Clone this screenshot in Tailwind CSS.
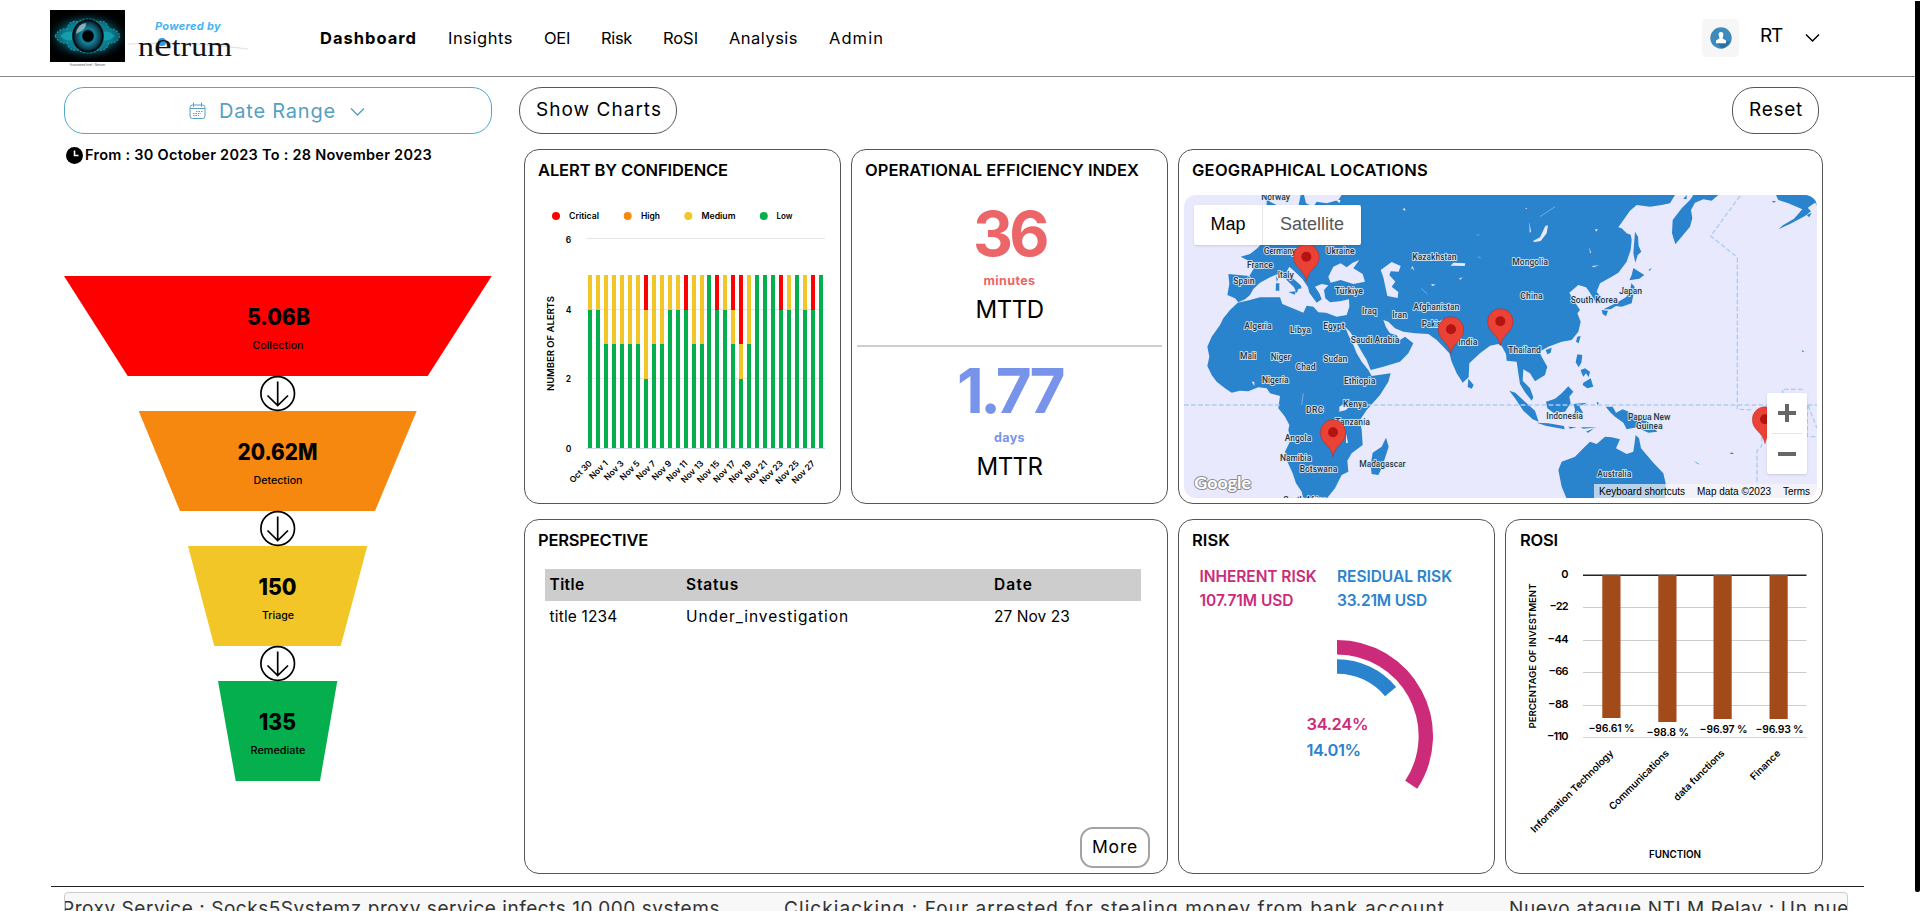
<!DOCTYPE html>
<html lang="en">
<head>
<meta charset="utf-8">
<title>Dashboard</title>
<script src="https://cdn.jsdelivr.net/npm/@tailwindcss/browser@4"></script>
</head>
<body class="relative h-[911px] w-[1920px] overflow-hidden whitespace-nowrap bg-white font-['Inter','Noto_Sans',sans-serif] text-black">
<header class="flex h-[77px] w-[1915px] items-start border-b border-[#8a8a8a]">
  <div class="ml-[50px] mt-[10px] flex w-[188px]">
    <div class="w-[75px]">
      <svg class="block" width="75" height="52" viewBox="0 0 75 52">
        <defs>
          <radialGradient id="glow"><stop offset="0" stop-color="#12b6cf"/><stop offset=".55" stop-color="#0a6f84"/><stop offset="1" stop-color="#000" stop-opacity="0"/></radialGradient>
          <radialGradient id="iris"><stop offset=".3" stop-color="#031018"/><stop offset=".45" stop-color="#15829b"/><stop offset=".8" stop-color="#0b4454"/><stop offset="1" stop-color="#01080c"/></radialGradient>
        </defs>
        <rect width="75" height="52" fill="#000"/>
        <ellipse cx="37.500" cy="26" rx="44" ry="26" fill="url(#glow)" opacity=".75"/>
        <path d="M5 26Q9 18 17 19Q20 9 28 12Q38 6 48 12Q56 9 59 19Q67 18 70 26Q67 34 59 33Q56 42 48 40Q38 46 28 40Q20 42 17 33Q9 34 5 26Z" fill="#0fa0b4" fill-opacity=".5" stroke="#1cb9c8" stroke-opacity=".7" stroke-width="1.200" stroke-dasharray="2 1.500"/>
        <path d="M10 26Q16 20 22 22V30Q16 32 10 26ZM65 26Q59 20 53 22V30Q59 32 65 26Z" fill="#1fc3d2" fill-opacity=".45"/>
        <ellipse cx="38" cy="26" rx="15" ry="16" fill="url(#iris)" stroke="#00090d" stroke-width="1.500"/>
        <circle cx="38" cy="26" r="5.500" fill="#000"/>
        <path d="M26 24Q27 14 36 13Q37 19 26 24Z" fill="#b9d5dc" opacity=".7"/>
      </svg>
      <div class="mt-px text-center text-[3px] leading-[4px] text-gray-600">Automated Intel : Netrum</div>
    </div>
    <div class="ml-[13px] w-[100px]">
      <div class="pl-[17px] pt-[7px] text-[11px] font-bold italic leading-[18px] text-[#45b4f5]"><span data-w="66">Powered by</span></div>
      <svg class="-ml-[10px] block overflow-visible" width="122" height="26" viewBox="128 35 122 26">
        <path d="M128 44Q190 40 248 49Q190 42 128 44Z" fill="#ccc" stroke="#ddd" stroke-width=".5"/>
        <circle cx="162" cy="42" r="4" fill="#2b9be6"/>
        <text x="138" y="55.500" font-family="Liberation Serif" font-size="27" fill="#111" textLength="94" lengthAdjust="spacingAndGlyphs">n<tspan font-size="34">e</tspan>trum</text>
      </svg>
    </div>
  </div>
  <nav class="ml-[82px] mt-[22px] flex gap-[31px] text-[16.500px] leading-[32px]">
    <b class="font-bold"><span data-w="97">Dashboard</span></b><span data-w="65">Insights</span><span data-w="26">OEI</span><span data-w="31">Risk</span><span data-w="35">RoSI</span><span data-w="69">Analysis</span><span data-w="55">Admin</span>
  </nav>
  <div class="ml-auto mr-[95px] mt-[19px] flex">
    <div class="flex h-[38px] w-[37px] items-center justify-center rounded-[5px] bg-[#f6f6f6]">
      <svg width="22" height="22" viewBox="0 0 22 22"><circle cx="11" cy="11" r="10.700" fill="#3d8abd"/><path d="M13 15L20 14Q18 20 12 21.500L7 16Z" fill="#2f6f9d"/><path d="M11 5C8.800 5 8.300 6.800 8.800 8.800L9.500 11.500L6 13.500V16.200H16V13.500L12.500 11.500L13.200 8.800C13.700 6.800 13.200 5 11 5Z" fill="#fff"/></svg>
    </div>
    <div class="ml-[21px] text-[19px] leading-[34px]"><span data-w="22">RT</span></div>
    <svg class="ml-[23px] mt-[14px]" width="15" height="10" viewBox="0 0 15 10" fill="none" stroke="#000" stroke-width="1.500"><path d="M1 1.500L7.500 8L14 1.500"/></svg>
  </div>
</header>

<main class="flex h-[809px] gap-[27px] pl-[64px] pt-[10px]">
  <section class="w-[428px]">
    <button class="flex h-[47px] w-[428px] items-center rounded-[20px] border border-[#4fa9c8] pl-[124px] text-[20px] text-[#559fc2]">
      <svg width="17" height="18" viewBox="0 0 17 18" fill="none" stroke="#559fc2"><rect x="1" y="3" width="15" height="13.500" rx="2.500"/><path d="M1 6.500H16M4.500 .5V5M12.500 .5V5"/><path d="M7 9.500H14M4 11.500H12M4 13.500H10" stroke-dasharray="1.500 1"/></svg>
      <span class="ml-[13px]" data-w="117">Date Range</span>
      <svg class="ml-[14px] mt-[2px]" width="15" height="10" viewBox="0 0 15 10" fill="none" stroke="#559fc2" stroke-width="1.400"><path d="M1 1.500L7.500 8L14 1.500"/></svg>
    </button>
    <div class="mt-[11px] flex h-[20px] items-center text-[14.500px] font-semibold leading-[20px]">
      <svg class="ml-[2px]" width="17" height="17" viewBox="0 0 17 17"><circle cx="8.500" cy="8.500" r="8.500"/><path d="M8.500 3.500V8.500H12.500" fill="none" stroke="#fff" stroke-width="1.600"/></svg>
      <span class="ml-[2px]" data-w="347">From : 30 October 2023 To : 28 November 2023</span>
    </div>
    <svg class="mt-[111px] block" width="428" height="506" viewBox="64 276 428 506" text-anchor="middle">
      <path d="M64 276H491.700L427.700 376H127.700Z" fill="#f00"/>
      <path d="M138.700 411H416.700L375 511H180Z" fill="#f7880f"/>
      <path d="M188 546H367.300L340.700 646H214.300Z" fill="#f2c626"/>
      <path d="M218 681H337.300L320 781H235.700Z" fill="#06af4d"/>
      <g fill="none" stroke="#000" stroke-width="1.700">
        <g id="step"><circle cx="277.700" cy="393.500" r="16.800"/><path d="M277.700 381.500V405.500M267.500 395.500L277.700 405.500L288 395.500"/></g>
        <use href="#step" y="135"/><use href="#step" y="270"/>
      </g>
      <g font-size="22.500" font-weight="800">
        <text x="278.500" y="325" textLength="63" lengthAdjust="spacingAndGlyphs">5.06B</text>
        <text x="277.500" y="460" textLength="80" lengthAdjust="spacingAndGlyphs">20.62M</text>
        <text x="277.500" y="595" textLength="38" lengthAdjust="spacingAndGlyphs">150</text>
        <text x="277.500" y="730" textLength="37" lengthAdjust="spacingAndGlyphs">135</text>
      </g>
      <g font-size="9.800" font-weight="500">
        <text x="278" y="349" textLength="51" lengthAdjust="spacingAndGlyphs">Collection</text>
        <text x="278" y="484" textLength="49" lengthAdjust="spacingAndGlyphs">Detection</text>
        <text x="278" y="619" textLength="32" lengthAdjust="spacingAndGlyphs">Triage</text>
        <text x="278" y="754" textLength="55" lengthAdjust="spacingAndGlyphs">Remediate</text>
      </g>
    </svg>
  </section>

  <section class="w-[1304px]">
    <div class="flex justify-between pr-[4px] text-[19px]">
      <button class="flex h-[47px] w-[158px] items-center rounded-[23px] border border-[#555] pl-[16px]"><span data-w="126">Show Charts</span></button>
      <button class="flex h-[47px] w-[87px] items-center rounded-[22px] border border-[#555] pl-[16px]"><span data-w="54">Reset</span></button>
    </div>
    <div class="ml-[5px] mt-[15px] grid grid-cols-[317px_317px_317px_318px] grid-rows-[355px_355px] gap-x-[10px] gap-y-[15px]">

      <article class="rounded-[15px] border border-[#555]">
        <h2 class="h-[40px] pl-[13px] text-[16.500px] font-semibold leading-[40px]"><span data-w="190">ALERT BY CONFIDENCE</span></h2>
        <svg class="block" width="315" height="313" viewBox="525 190 315 313" font-size="8.500" font-weight="600">
          <circle cx="556" cy="216" r="4" fill="#f00"/><circle cx="627.700" cy="216" r="4" fill="#f7880f"/><circle cx="688.300" cy="216" r="4" fill="#f2c626"/><circle cx="763.800" cy="216" r="4" fill="#06af4d"/>
          <text x="569" y="219" textLength="30" lengthAdjust="spacingAndGlyphs">Critical</text><text x="641" y="219" textLength="19" lengthAdjust="spacingAndGlyphs">High</text><text x="701.500" y="219" textLength="34" lengthAdjust="spacingAndGlyphs">Medium</text><text x="776.500" y="219" textLength="16" lengthAdjust="spacingAndGlyphs">Low</text>
          <path d="M586 238.500H825M586 309.500H825M586 378.500H825" stroke="#e6e6e6"/>
          <path d="M586 448.500H825" stroke="#ccd6eb"/>
          <g id="bars" shape-rendering="crispEdges"></g>
          <g text-anchor="middle"><text x="568.500" y="243">6</text><text x="568.500" y="312.500">4</text><text x="568.500" y="382">2</text><text x="568.500" y="452">0</text></g>
          <g id="days" text-anchor="end"></g>
          <text transform="translate(554 391) rotate(-90)" font-size="9.500" textLength="95" lengthAdjust="spacingAndGlyphs">NUMBER OF ALERTS</text>
        </svg>
      </article>

      <article class="rounded-[15px] border border-[#555]">
        <h2 class="h-[40px] pl-[13px] text-[16.500px] font-semibold leading-[40px]"><span data-w="274">OPERATIONAL EFFICIENCY INDEX</span></h2>
        <div class="flex h-[155px] flex-col items-center pt-[9px]">
          <div class="text-[62px] font-bold leading-[70px] text-[#ec6568]"><span data-w="73">36</span></div>
          <div class="mt-[2px] text-[12.500px] font-bold leading-[20px] text-[#ec6568]"><span data-w="52">minutes</span></div>
          <div class="text-[24px] leading-[38px]"><span data-w="68">MTTD</span></div>
        </div>
        <div class="mx-[5px] h-[2px] bg-[#cecece]"></div>
        <div class="flex h-[155px] flex-col items-center pt-[9px]">
          <div class="text-[62px] font-bold leading-[70px] text-[#7794ea]"><span data-w="105">1.77</span></div>
          <div class="mt-[2px] text-[12.500px] font-bold leading-[20px] text-[#7794ea]"><span data-w="31">days</span></div>
          <div class="text-[24px] leading-[38px]"><span data-w="66">MTTR</span></div>
        </div>
      </article>

      <article class="col-span-2 rounded-[15px] border border-[#555]">
        <h2 class="h-[40px] pl-[13px] text-[16.500px] font-semibold leading-[40px]"><span data-w="236">GEOGRAPHICAL LOCATIONS</span></h2>
        <div class="relative ml-[5px] mt-[5px] h-[303px] w-[633px] overflow-hidden rounded-[12px] bg-[#e9e9fe]">
          <svg class="block" width="633" height="303" viewBox="42 165 1899 909">
            <g fill="#2a83cd">
              <path d="M290 165L300 185L330 200L385 200L392 165L402 165L408 190L430 200L440 185L470 190L505 180L515 165H1515L1500 190L1475 195L1440 200L1400 195L1380 212L1345 262L1355 265L1370 280L1382 284L1385 300L1382 330L1370 365L1345 398L1325 410L1290 430L1280 455L1297 478L1280 492L1270 475L1258 455L1248 442L1225 435L1198 458L1212 482L1230 510L1222 520L1232 545L1225 575L1205 600L1175 605L1135 620L1108 635L1115 650L1132 680L1125 705L1095 724L1080 700L1060 688L1058 722L1080 745L1090 772L1085 782L1065 757L1050 732L1045 700L1040 665L1010 662L1008 642L995 618L985 612L960 617L930 640L898 670L896 712L878 728L860 700L845 665L838 640L820 620L800 600L775 582L735 580L700 575L675 565L655 545L640 540L648 562L660 580L680 586L690 600L705 590L730 610L715 640L690 665L640 680L602 690L590 660L575 635L555 600L540 575L525 560L535 585L550 615L560 640L575 665L595 690L605 708L662 700L655 725L630 765L590 810L570 840L575 870L578 915L545 940L532 962L535 995L515 1005L495 1045L470 1076H400L395 1055L378 1030L368 1000L350 960L345 935L362 900L355 870L358 855L345 830L325 805L330 768L300 760L290 745L265 742L235 754L210 752L185 758L165 745L140 725L125 705L112 678L118 650L112 620L125 590L150 555L160 535L180 510L203 488L240 480L270 472L330 472L337 492L375 508L400 518L410 497L430 500L445 517L468 518L500 530L530 525L538 500L537 478L510 484L480 487L466 475L462 450L475 436L455 432L435 440L448 460L455 478L440 488L430 475L418 458L414 442L398 418L375 395L358 380L350 395L365 412L392 436L395 445L385 447L380 460L372 442L350 420L338 400L318 404L300 412L270 428L250 447L240 465L225 478L205 487L195 475L172 465L178 432L175 402L238 408L250 388L243 366L212 350L240 342L262 325L275 310L290 260Z"/>
              <path d="M648 893L656 920L635 985L625 1005L605 1002L602 975L608 938L635 920ZM895 716L911 735L905 746L893 741ZM318 430H328V452H317ZM355 456L378 454L374 464ZM318 408L324 418L320 425Z"/>
              <g transform="translate(960)">
                <path d="M610 165L600 180L575 205L548 240L546 280L556 313L575 290L600 260L607 235L603 210L615 188L640 178L665 182L685 165ZM590 165L580 176L590 178ZM858 165L865 180L895 190L937 208L912 236L880 255L865 268L900 252L945 228L963 214L953 203L975 188L985 200L980 165ZM845 183H858L852 188ZM950 225L965 218L958 232Z"/>
                <path d="M435 275L444 290L446 318L454 335L443 345L436 368L430 340ZM430 384L463 405L448 416L418 421L425 405ZM424 430L434 440L430 465L425 490L395 500L378 498L362 508L340 508L380 488L408 472L420 452ZM335 510L354 512L348 529L338 522ZM262 590L272 588L266 610L258 605ZM167 630L185 623L182 638L172 643ZM262 643L277 645L274 668L266 682L257 667ZM280 728L302 715L310 740L292 745L278 735ZM272 690L285 685L300 695L296 712L288 700L280 710L275 700ZM246 718L258 708L250 715ZM475 390L485 384L480 392Z"/>
                <path d="M58 752L76 758L105 785L135 812L146 845L128 838L100 812L75 775ZM168 785L195 776L215 760L235 739L250 755L238 770L242 790L225 815L190 818L172 805ZM140 848L175 850L222 858L224 868L170 858ZM250 792L292 788L268 799L280 820L262 816L262 832L252 828L255 808ZM235 860L260 862L240 866ZM272 862L322 862L280 866ZM288 875L312 865L295 878ZM320 786L327 788L322 796Z"/>
                <path d="M347 800L368 800L378 818L398 808L440 825L478 848L502 875L475 878L440 862L410 868L400 848L375 830L362 818ZM505 835L530 830L510 842ZM612 962L632 975L620 970ZM720 938H730V942H722ZM935 631L944 634L937 636Z"/>
                <path d="M205 990L215 965L255 950L280 925L300 905L320 912L345 890L365 892L390 898L378 925L410 942L430 935L437 885L447 895L453 925L490 968L520 1000L527 1030L525 1076H230L215 1040Z"/>
              </g>
            </g>
            <g fill="#e9e9fe">
              <path d="M475 410L490 380L512 370L530 382L548 368L568 360L550 385L578 402L585 425L550 432L512 420L482 428ZM632 390L665 366L692 378L686 395L662 394L658 405L676 425L665 440L685 456L683 474L652 468L646 440L640 412ZM842 378L850 368L886 370L884 378L852 377ZM720 390L728 378L733 392L726 384ZM508 800L525 790L545 792L528 810L508 815ZM498 180H512L508 190ZM697 207L705 205L706 213ZM245 725H253V738ZM446 490H458V494H446ZM498 492L515 488L505 495ZM528 880L534 908L528 910ZM868 415L878 412L870 420ZM784 432L798 434L786 438Z"/>
              <path d="M1088 304L1110 292L1126 258L1134 256L1130 280L1112 303L1095 306ZM1275 268H1284L1278 275ZM1078 245L1083 275L1079 278ZM1266 378L1288 376L1270 382ZM1258 320L1263 338L1260 340ZM1066 203L1072 205L1068 208Z"/>
            </g>
            <g fill="none" stroke="#9dbfe9" stroke-width="2"><path d="M1110 230L1155 200M395 795L400 760M754 445L772 462M920 283L928 287M924 350L932 354"/></g>
            <g fill="none" stroke="#a9cdf2" stroke-width="4" stroke-dasharray="14 7">
              <path d="M42 795H330M590 795H1941M1710 168L1622 288L1702 352V808L1750 810M1838 765V748H1895L1941 865M1912 795V890H1941M1775 890V918L1761 932V1035"/>
            </g>
            <g font-family="Roboto" font-size="26" font-weight="500" fill="#253545" stroke="#dfe9f6" stroke-width="6" stroke-linejoin="round" paint-order="stroke" stroke-opacity=".85">
              <text x="274" y="181" textLength="86">Norway</text><text x="281" y="342" textLength="97">Germany</text><text x="468" y="342" textLength="86">Ukraine</text><text x="231" y="385" textLength="78">France</text><text x="323" y="415" textLength="48">Italy</text><text x="190" y="433" textLength="64">Spain</text><text x="495" y="462" textLength="84">Türkiye</text><text x="727" y="359" textLength="133">Kazakhstan</text><text x="576" y="522" textLength="45">Iraq</text><text x="667" y="534" textLength="44">Iran</text><text x="730" y="509" textLength="138">Afghanistan</text><text x="755" y="560" textLength="92">Pakistan</text><text x="865" y="615" textLength="57">India</text><text x="223" y="567" textLength="82">Algeria</text><text x="360" y="578" textLength="63">Libya</text><text x="460" y="567" textLength="64">Egypt</text><text x="542" y="609" textLength="146">Saudi Arabia</text><text x="210" y="657" textLength="49">Mali</text><text x="302" y="660" textLength="60">Niger</text><text x="377" y="691" textLength="60">Chad</text><text x="460" y="666" textLength="72">Sudan</text><text x="276" y="728" textLength="80">Nigeria</text><text x="522" y="733" textLength="94">Ethiopia</text><text x="408" y="818" textLength="52">DRC</text><text x="519" y="802" textLength="72">Kenya</text><text x="496" y="855" textLength="104">Tanzania</text><text x="344" y="904" textLength="80">Angola</text><text x="330" y="963" textLength="94">Namibia</text><text x="389" y="997" textLength="113">Botswana</text><text x="568" y="980" textLength="139">Madagascar</text><text x="340" y="1090" textLength="130">South Africa</text>
              <text x="1027" y="376" textLength="107">Mongolia</text><text x="1051" y="478" textLength="67">China</text><text x="1348" y="461" textLength="68">Japan</text><text x="1202" y="489" textLength="141">South Korea</text><text x="1015" y="640" textLength="98">Thailand</text><text x="1129" y="838" textLength="110">Indonesia</text><text x="1374" y="841" textLength="127">Papua New</text><text x="1398" y="867" textLength="80">Guinea</text><text x="1282" y="1011" textLength="102">Australia</text>
            </g>
            <g id="pin"><path d="M409 423C402 385 371 385 371 350A38 38 0 0 1 447 350C447 385 416 385 409 423Z" fill="#ea4335" stroke="#b31412" stroke-opacity=".6" stroke-width="2"/><circle cx="409" cy="350" r="15" fill="#b31412"/></g>
            <use href="#pin" x="434" y="218"/><use href="#pin" x="582" y="194"/><use href="#pin" x="80" y="527"/><use href="#pin" x="1376" y="488"/>
            <text x="73" y="1047" font-family="Lato" font-weight="700" font-size="53" fill="#fff" stroke="#8b8b95" stroke-width="6" paint-order="stroke" textLength="170" lengthAdjust="spacingAndGlyphs">Google</text>
          </svg>
          <div class="absolute left-[10px] top-[10px] flex h-[40px] rounded-[2px] bg-white font-['Liberation_Sans'] text-[18px] leading-[38px] shadow">
            <div class="w-[69px] border-r border-gray-200 text-center"><span data-w="35">Map</span></div><div class="w-[98px] text-center text-[#565656]"><span data-w="64">Satellite</span></div>
          </div>
          <div class="absolute right-[10px] top-[198px] h-[81px] w-[40px] rounded-[2px] bg-white shadow">
            <svg width="40" height="81" viewBox="0 0 40 81" fill="#666"><path d="M18 11h4v7h7v4h-7v7h-4v-7h-7v-4h7zM11 59h18v4H11z"/><path d="M5 40h30v1H5z" fill="#e6e6e6"/></svg>
          </div>
          <div class="absolute bottom-0 right-0 flex h-[14px] w-[223px] bg-[#f5f5f5]/70 pl-[5px] text-[10px] leading-[15px] font-['Liberation_Sans']">
            <span data-w="86">Keyboard shortcuts</span><span class="ml-[12px]" data-w="74">Map data ©2023</span><span class="ml-[12px]" data-w="27">Terms</span>
          </div>
        </div>
      </article>

      <article class="col-span-2 flex flex-col rounded-[15px] border border-[#555]">
        <h2 class="h-[40px] pl-[13px] text-[16.500px] font-semibold leading-[40px]"><span data-w="110">PERSPECTIVE</span></h2>
        <div class="ml-[20px] mt-[9px] w-[596px] text-[15.500px]">
          <div class="grid h-[32px] grid-cols-[136.500px_308px_1fr] bg-[#cdcdcd] pl-[4.500px] font-semibold leading-[32px]"><div><span data-w="35">Title</span></div><div><span data-w="53">Status</span></div><div><span data-w="39">Date</span></div></div>
          <div class="grid h-[32px] grid-cols-[136.500px_308px_1fr] pl-[4.500px] leading-[32px]"><div><span data-w="68">title 1234</span></div><div><span data-w="163">Under_investigation</span></div><div><span data-w="76">27 Nov 23</span></div></div>
        </div>
        <button class="mb-[5px] ml-auto mr-[17px] mt-auto h-[41px] w-[70px] rounded-[13px] border-2 border-[#a3a3a3] text-[17.500px]"><span data-w="46">More</span></button>
      </article>

      <article class="rounded-[15px] border border-[#555]">
        <h2 class="h-[40px] pl-[13px] text-[16.500px] font-semibold leading-[40px]"><span data-w="38">RISK</span></h2>
        <div class="grid grid-cols-[137.500px_1fr] pl-[20.500px] pt-[5px] text-[15.500px] font-semibold leading-[24px]">
          <div class="text-[#cc2b7a]"><div><span data-w="117">INHERENT RISK</span></div><div><span data-w="94">107.71M USD</span></div></div>
          <div class="text-[#2a83cd]"><div><span data-w="115">RESIDUAL RISK</span></div><div><span data-w="90">33.21M USD</span></div></div>
        </div>
        <svg class="block" width="315" height="250" viewBox="1179 613 315 250" fill="none" stroke-width="14.400">
          <path d="M1337 647.200A88.800 88.800 0 0 1 1411.200 784.800" stroke="#cc2b7a"/>
          <path d="M1337 666.500A69.500 69.500 0 0 1 1390.600 691.700" stroke="#2a83cd"/>
          <g stroke="none" font-size="16.500" font-weight="600"><text x="1306.500" y="730" fill="#cc2b7a" textLength="62">34.24%</text><text x="1306.500" y="756" fill="#2a83cd" textLength="54.500">14.01%</text></g>
        </svg>
      </article>

      <article class="rounded-[15px] border border-[#555]">
        <h2 class="h-[40px] pl-[14px] text-[16.500px] font-semibold leading-[40px]"><span data-w="38">ROSI</span></h2>
        <svg class="block" width="316" height="313" viewBox="1506 560 316 313" font-size="11" font-weight="600">
          <path d="M1583 607.500H1806.500M1583 640.500H1806.500M1583 672.500H1806.500M1583 705.500H1806.500" stroke="#ccc"/>
          <path d="M1583 737.500H1806.500" stroke="#ccd6eb"/>
          <path d="M1583 575.300H1806.500" stroke="#222" stroke-width="1.500"/>
          <g fill="#a34a1b"><path d="M1602.300 575H1620.500V718H1602.300ZM1658.300 575H1676.500V722H1658.300ZM1713.500 575H1731.700V719H1713.500ZM1769.500 575H1787.700V719H1769.500Z"/></g>
          <g text-anchor="end"><text x="1568.500" y="578">0</text><text x="1568.500" y="610" textLength="19">−22</text><text x="1568.500" y="643" textLength="21">−44</text><text x="1568.500" y="675" textLength="20">−66</text><text x="1568.500" y="708" textLength="20.500">−88</text><text x="1568.500" y="740" textLength="21.500">−110</text></g>
          <g stroke="#fff" stroke-width="2" paint-order="stroke" font-size="10.500"><text x="1588.500" y="732" textLength="46">−96.61 %</text><text x="1646.500" y="736" textLength="42.500">−98.8 %</text><text x="1699.500" y="733" textLength="48">−96.97 %</text><text x="1755.500" y="733" textLength="48">−96.93 %</text></g>
          <g text-anchor="end" font-size="9.800">
            <text transform="translate(1614 754) rotate(-45)" textLength="112">Information Technology</text>
            <text transform="translate(1669.500 754) rotate(-45)" textLength="80">Communications</text>
            <text transform="translate(1725 754) rotate(-45)" textLength="67">data functions</text>
            <text transform="translate(1781 754) rotate(-45)" textLength="38">Finance</text>
          </g>
          <text transform="translate(1536 728.500) rotate(-90)" font-size="9.300" textLength="145" lengthAdjust="spacingAndGlyphs">PERCENTAGE OF INVESTMENT</text>
          <text x="1649" y="858" font-size="10" textLength="52" lengthAdjust="spacingAndGlyphs">FUNCTION</text>
        </svg>
      </article>
    </div>
  </section>
</main>

<footer class="ml-[51px] w-[1813px] border-t border-[#222]">
  <div class="ml-[13px] mt-[5px] h-[40px] w-[1784px] overflow-hidden rounded-[4px] border border-[#ccc] bg-[#f8f8f8]">
    <div class="ml-[-3px] flex gap-[64px] text-[19px] leading-[31px] text-[#333]"><span data-w="658">Proxy Service : Socks5Systemz proxy service infects 10,000 systems</span><span data-w="661">Clickjacking : Four arrested for stealing money from bank account</span><span data-w="340">Nuevo ataque NTLM Relay : Un nue</span></div>
  </div>
</footer>
<div class="absolute right-0 top-[1px] h-[891px] w-[5px] rounded-b-[2px] bg-black"></div>

<script>
  // One entry per day from Oct 30 to Nov 28: counts of low, medium and critical alerts.
  const alerts = ['410','410','320','320','320','320','320','221','320','320','410','410','401','320','320','500','401','410','311','212','320','500','500','500','401','410','500','410','401','500'];
  const colours = ['#06af4d', '#f2c626', '#f00'];
  let bars = '', days = '';
  alerts.forEach((a, i) => {
    const x = 588 + i * 7.966;
    let total = 0;
    [...a].forEach((n, k) => {
      if (+n) bars += `<rect x="${Math.round(x)}" y="${448 - (total + +n) * 34.6}" width="4" height="${n * 34.6}" fill="${colours[k]}"/>`;
      total += +n;
    });
    if (i % 2 === 0) days += `<text transform="translate(${x + 4.5} 464) rotate(-45)">${i ? 'Nov ' + (i - 1) : 'Oct 30'}</text>`;
  });
  document.getElementById('bars').innerHTML = bars;
  document.getElementById('days').innerHTML = days;

  // Track each label out or in so that it fills its data-w width.
  function track() {
    document.querySelectorAll('[data-w]').forEach(el => {
      el.style.letterSpacing = '0px';
      const width = el.getBoundingClientRect().width;
      el.style.letterSpacing = (el.dataset.w - width) / el.textContent.length + 'px';
    });
  }
  addEventListener('load', () => { track(); document.fonts.ready.then(track); setTimeout(track, 60); });
</script>
</body>
</html>
